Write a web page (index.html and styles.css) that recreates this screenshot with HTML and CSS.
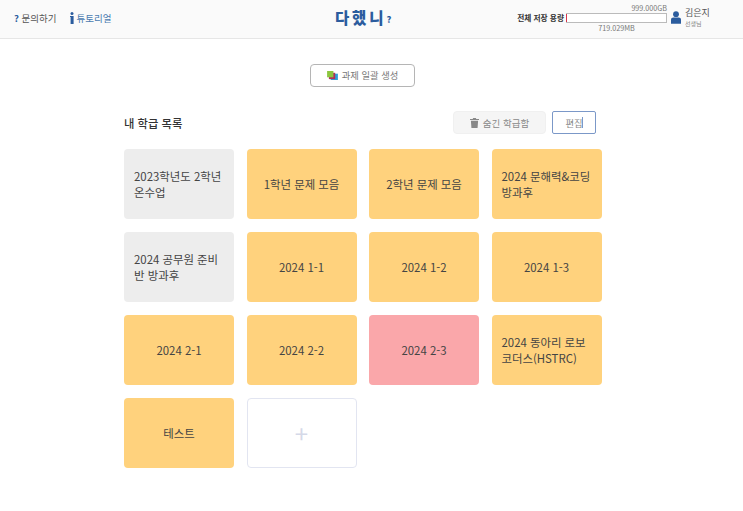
FILE: index.html
```html
<!DOCTYPE html>
<html lang="ko">
<head>
  <meta charset="UTF-8">
  <meta name="viewport" content="width=device-width, initial-scale=1">
  <title>다했니?</title>
  <link rel="stylesheet" href="styles.css">
</head>
<body>
  <div class="header">
    <div class="header-left">
      <a class="help-link"><b class="help-mark">?</b> 문의하기</a>
      <a class="tutorial-link">
        <svg class="info-icon" width="4" height="12" viewBox="0 0 4 12"><circle cx="2" cy="1.5" r="1.5"/><path d="M0 4h3.6v8H.6V5H0z"/></svg>
        튜토리얼
      </a>
    </div>
    <div class="logo">다 했 니<span class="logo-mark">?</span></div>
    <div class="header-right">
      <span class="storage-label">전체 저장 용량</span>
      <div class="storage">
        <div class="storage-max">999.000GB</div>
        <div class="storage-bar"><div class="storage-used" style="width: 1px"></div></div>
        <div class="storage-now">719.029MB</div>
      </div>
      <svg class="user-icon" width="10" height="13" viewBox="0 0 11 14"><circle cx="5.5" cy="3.3" r="3.2"/><path d="M0 14V9.5C0 8 1.2 7 2.6 7h5.8C9.8 7 11 8 11 9.5V14z"/></svg>
      <div class="user">
        <div class="user-name">김은지</div>
        <div class="user-role">선생님</div>
      </div>
    </div>
  </div>

  <div class="main">
    <button class="bulk-btn">
      <svg width="11" height="9" viewBox="0 0 12 10"><rect x="4" y="3" width="8" height="7" fill="#2f9fd8"/><rect x="2" y="2" width="7" height="7" fill="#b0305a"/><rect x="0" y="0" width="7" height="7" fill="#8cc63f"/></svg>
      과제 일괄 생성
    </button>

    <div class="list-head">
      <h2>내 학급 목록</h2>
      <div class="list-actions">
        <button class="hidden-btn">
          <svg width="9" height="10" viewBox="0 0 10 11" fill="#888"><path d="M3.5 0h3l.5 1h3v1.2H0V1h3zM1 3h8l-.6 8H1.6z"/></svg>
          숨긴 학급함
        </button>
        <button class="edit-btn">편집</button>
      </div>
    </div>

    <div class="class-grid">
      <div class="card gray left">2023학년도 2학년 온수업</div>
      <div class="card orange">1학년 문제 모음</div>
      <div class="card orange">2학년 문제 모음</div>
      <div class="card orange left">2024 문해력&amp;코딩 방과후</div>
      <div class="card gray left">2024 공무원 준비반 방과후</div>
      <div class="card orange">2024 1-1</div>
      <div class="card orange">2024 1-2</div>
      <div class="card orange">2024 1-3</div>
      <div class="card orange">2024 2-1</div>
      <div class="card orange">2024 2-2</div>
      <div class="card pink">2024 2-3</div>
      <div class="card orange left">2024 동아리 로보코더스(HSTRC)</div>
      <div class="card orange">테스트</div>
      <div class="card add">+</div>
    </div>
  </div>
</body>
</html>
```

FILE: styles.css
```css
* {
  box-sizing: border-box;
}

body {
  margin: 0;
  font-family: "Noto Sans CJK KR", "Noto Sans", sans-serif;
  background: #fff;
  color: #444;
}

button {
  font-family: inherit;
}

.header {
  height: 39px;
  background: #fafafa;
  border-bottom: 1px solid #e6e6e6;
  display: flex;
  align-items: center;
  padding: 0 32px 3px 14px;
}

.header-left {
  display: flex;
  align-items: center;
  gap: 13px;
  width: 321px;
  font-size: 9.5px;
}

.help-link {
  color: #555;
}

.help-mark {
  color: #2b5c9e;
}

.tutorial-link {
  color: #4a7ab0;
  display: flex;
  align-items: center;
  gap: 3px;
}

.info-icon {
  fill: #2b5c9e;
}

.logo {
  font-size: 15.5px;
  font-weight: 900;
  color: #2b5c9e;
  line-height: 1;
  word-spacing: -1.5px;
}

.logo-mark {
  font-size: 9px;
  margin-left: 3px;
  vertical-align: 1px;
}

.header-right {
  display: flex;
  align-items: center;
  justify-content: flex-end;
  margin-left: auto;
}

.storage-label {
  font-size: 7.7px;
  font-weight: 700;
  color: #333;
  margin-right: 2px;
}

.storage {
  width: 101px;
  font-size: 7.2px;
  line-height: 10px;
  color: #777;
}

.storage-max {
  text-align: right;
}

.storage-bar {
  height: 10px;
  border: 1px solid #bbb;
  border-left: 0;
  background: #fff;
  display: flex;
}

.storage-used {
  background: #d8344a;
}

.storage-now {
  text-align: center;
}

.user-icon {
  fill: #2b5c9e;
  margin: 0 4px;
}

.user {
  width: 26px;
  white-space: nowrap;
}

.user-name {
  font-size: 9px;
  line-height: 12px;
  color: #555;
}

.user-role {
  font-size: 6px;
  line-height: 9px;
  color: #888;
}

.main {
  width: 478px;
  margin: 0 0 0 124px;
  display: flex;
  flex-direction: column;
}

.bulk-btn {
  align-self: center;
  width: 105px;
  height: 23px;
  margin: 25px 0 0 -1px;
  padding: 0 0 1px;
  background: #fff;
  border: 1px solid #b5b5b5;
  border-radius: 4px;
  font-size: 9.3px;
  color: #777;
  display: flex;
  align-items: center;
  justify-content: center;
  gap: 4px;
}

.list-head {
  display: flex;
  align-items: center;
  justify-content: space-between;
  margin-top: 24px;
  height: 23px;
  padding-right: 6px;
}

.list-head h2 {
  margin: 0;
  font-size: 11.3px;
  font-weight: 500;
  color: #333;
}

.list-actions {
  display: flex;
  gap: 6px;
}

.hidden-btn {
  width: 93px;
  height: 23px;
  padding: 0;
  background: #f5f5f5;
  border: 1px solid #f0f0f0;
  border-radius: 4px;
  font-size: 9.5px;
  color: #888;
  display: flex;
  align-items: center;
  justify-content: center;
  gap: 4px;
}

.edit-btn {
  position: relative;
  width: 44px;
  height: 23px;
  padding: 0;
  background: #fff;
  border: 1px solid #7b98c8;
  border-radius: 2px;
  font-size: 9.3px;
  color: #888;
}

/* text cursor sitting on the label */
.edit-btn::after {
  content: "";
  position: absolute;
  left: 29px;
  top: 5px;
  width: 1px;
  height: 11px;
  background: #7b98c8;
}

.class-grid {
  display: grid;
  grid-template-columns: repeat(4, 110px);
  grid-auto-rows: 70px;
  gap: 13px 12.5px;
  margin-top: 15px;
}

.card {
  border-radius: 4px;
  padding: 0 10px;
  display: flex;
  align-items: center;
  justify-content: center;
  text-align: center;
  font-size: 11.4px;
  line-height: 16px;
  color: #444;
}

.card.left {
  text-align: left;
  justify-content: flex-start;
}

.card.gray {
  background: #ededed;
}

.card.orange {
  background: #ffd27d;
}

.card.pink {
  background: #faa7aa;
}

.card.add {
  background: #fff;
  border: 1px solid #e2e5f1;
  font-size: 24px;
  color: #d5d9e8;
}
```
